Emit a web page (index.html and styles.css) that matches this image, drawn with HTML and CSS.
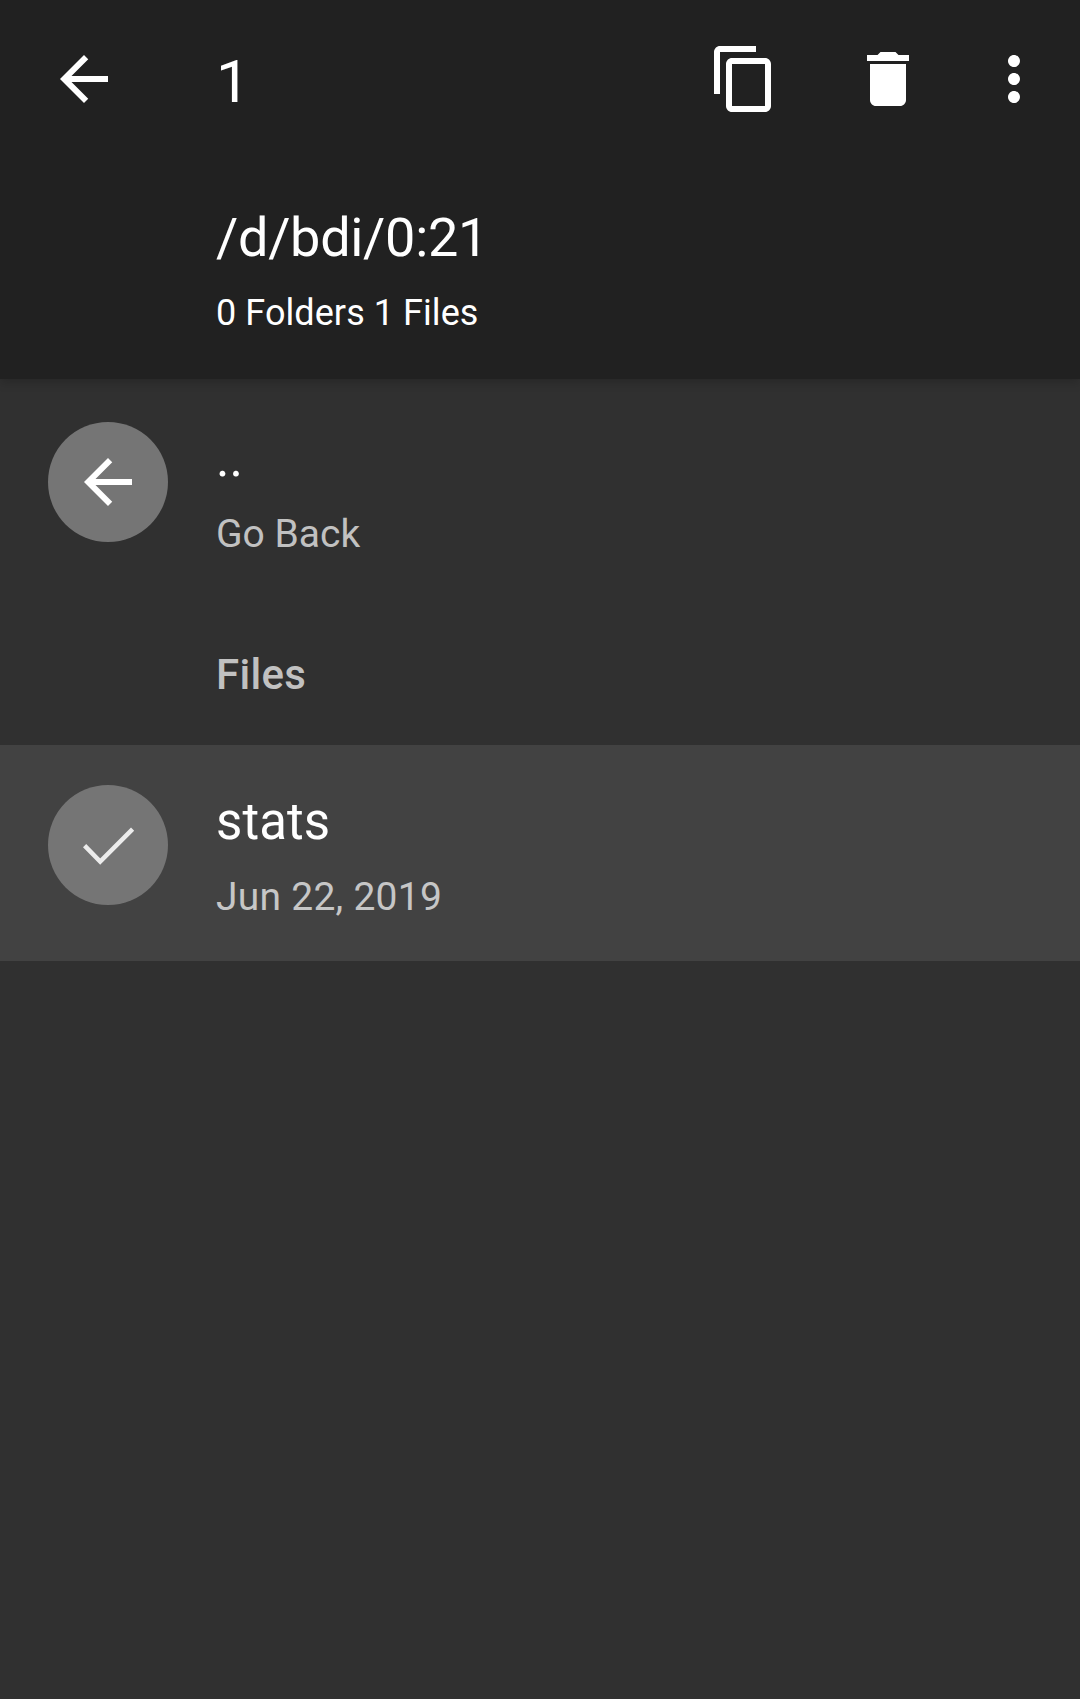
FILE: index.html
```html
<!DOCTYPE html>
<html lang="en">
<head>
<meta charset="utf-8">
<title>Files</title>
<link rel="stylesheet" href="styles.css">
</head>
<body>
<header class="header">
  <div class="toolbar">
    <svg class="icon back" viewBox="0 0 24 24"><path d="M20 11H7.83l5.59-5.59L12 4l-8 8 8 8 1.41-1.41L7.83 13H20v-2z"/></svg>
    <span class="count">1</span>
    <svg class="icon copy" viewBox="0 0 24 24"><path d="M16 1H4c-1.1 0-2 .9-2 2v14h2V3h12V1zm3 4H8c-1.1 0-2 .9-2 2v14c0 1.1.9 2 2 2h11c1.1 0 2-.9 2-2V7c0-1.1-.9-2-2-2zm0 16H8V7h11v14z"/></svg>
    <svg class="icon trash" viewBox="0 0 24 24"><path d="M6 19c0 1.1.9 2 2 2h8c1.1 0 2-.9 2-2V7H6v12zM19 4h-3.500l-1-1h-5l-1 1H5v2h14V4z"/></svg>
    <svg class="icon more" viewBox="0 0 24 24"><path d="M12 8c1.1 0 2-.9 2-2s-.9-2-2-2-2 .9-2 2 .9 2 2 2zm0 2c-1.100 0-2 .9-2 2s.9 2 2 2 2-.9 2-2-.9-2-2-2zm0 6c-1.100 0-2 .9-2 2s.9 2 2 2 2-.9 2-2-.9-2-2-2z"/></svg>
  </div>
  <div class="path">/d/bdi/0:21</div>
  <div class="summary">0 Folders 1 Files</div>
</header>
<main class="list">
  <div class="row parent">
    <div class="avatar"><svg class="icon" viewBox="0 0 24 24"><path d="M20 11H7.83l5.59-5.59L12 4l-8 8 8 8 1.41-1.41L7.83 13H20v-2z"/></svg></div>
    <div class="info"><div class="name">..</div><div class="detail">Go Back</div></div>
  </div>
  <h2 class="section">Files</h2>
  <div class="row selected">
    <div class="avatar"><svg class="icon check" viewBox="0 0 24 24"><path d="M4.200 12.200l5.200 5.300L20.200 6.700"/></svg></div>
    <div class="info"><div class="name">stats</div><div class="detail date">Jun 22, 2019</div></div>
  </div>
</main>
</body>
</html>
```
FILE: styles.css
```css
* { box-sizing: border-box; }
body { margin: 0; min-height: 1699px; background: #303030; color: #fff; font-family: Roboto, sans-serif; }
.header { height: 379px; background: #212121; box-shadow: 0 3px 10px rgba(0,0,0,.2); }
.toolbar { display: flex; align-items: center; height: 158px; }
.icon { display: block; width: 72px; height: 72px; fill: currentColor; flex: none; }
.back { margin-left: 48px; }
.count { width: 486px; margin-left: 96px; padding-top: 5px; font-size: 60px; }
.copy { margin-left: 6px; }
.trash { margin-left: 72px; }
.more { margin-left: 54px; }
.path { margin-left: 216px; padding-top: 48px; font-size: 54px; line-height: 64px; letter-spacing: -.3px; }
.summary { margin-left: 216px; padding-top: 22px; font-size: 36px; line-height: 42px; letter-spacing: .07px; }
.row { display: flex; height: 216px; padding: 40px 48px 0; }
.parent { height: 214px; padding-top: 43px; }
.avatar { display: flex; align-items: center; justify-content: center; flex: none; width: 120px; height: 120px; border-radius: 50%; background: #757575; }
.info { margin-left: 48px; }
.name { font-size: 51px; line-height: 60px; padding-top: 7px; letter-spacing: .1px; }
.detail { color: #c1c1c1; font-size: 39px; line-height: 46px; padding-top: 22px; }
.date { color: #c6c6c6; letter-spacing: .25px; }
.section { height: 152px; margin: 0; padding: 57px 0 0 216px; color: #c1c1c1; font-size: 42px; line-height: 49px; font-weight: 500; letter-spacing: .3px; }
.selected { background: #424242; }
.check { fill: none; stroke: #ececec; stroke-width: 1.5; }
```
